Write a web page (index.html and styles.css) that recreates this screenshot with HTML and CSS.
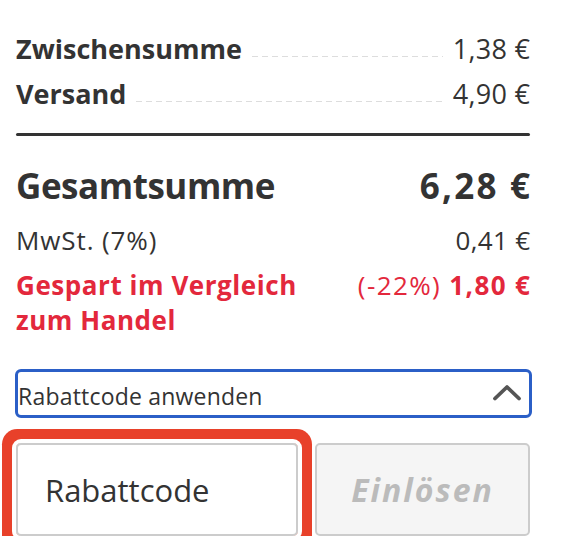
FILE: index.html
```html
<!DOCTYPE html>
<html lang="de">
<head>
<meta charset="utf-8">
<title>Warenkorb Summe</title>
<link rel="stylesheet" href="styles.css">
</head>
<body>
<div class="summary">
  <div class="line">
    <span class="label">Zwischensumme</span>
    <span class="leader"></span>
    <span class="value">1,38 €</span>
  </div>
  <div class="line">
    <span class="label">Versand</span>
    <span class="leader"></span>
    <span class="value">4,90 €</span>
  </div>
  <div class="divider"></div>
  <div class="total">
    <span class="total-label">Gesamtsumme</span>
    <span class="total-value">6,28 €</span>
  </div>
  <div class="tax">
    <span class="tax-label">MwSt. (7%)</span>
    <span class="tax-value">0,41 €</span>
  </div>
  <div class="saved">
    <span class="saved-label">Gespart im Vergleich zum Handel</span>
    <span class="saved-value"><span class="pct">(-22%)</span> <b>1,80 €</b></span>
  </div>
  <div class="coupon-toggle">
    <span class="toggle-text">Rabattcode anwenden</span>
    <svg class="chev" width="30" height="17" viewBox="0 0 30 17"><path d="M3 14.5 L15 3 L27 14.5" fill="none" stroke="#555" stroke-width="3.8" stroke-linecap="round" stroke-linejoin="round"/></svg>
  </div>
  <div class="coupon-row">
    <div class="input">Rabattcode</div>
    <div class="btn">Einlösen</div>
  </div>
</div>
</body>
</html>
```
FILE: styles.css
```css
html, body {
  margin: 0;
  padding: 0;
  background: #fff;
}
body {
  font-family: "Open Sans", "DejaVu Sans", sans-serif;
  color: #333;
}
.summary {
  width: 514px;
  margin-left: 16px;
  padding-top: 26px;
}
.line {
  display: flex;
  align-items: baseline;
  height: 45px;
  line-height: 45px;
  font-size: 27px;
}
.label {
  font-weight: 700;
}
.value {
  font-weight: 400;
  letter-spacing: 0.3px;
  margin-right: -0.3px;
}
.leader {
  flex: 1;
  height: 1px;
  margin: 0 10px;
  background: repeating-linear-gradient(to right, #ddd 0 6px, transparent 6px 10px);
  transform: translateY(-2px);
}
.divider {
  height: 3px;
  background: #333;
  border-radius: 2px;
  margin-top: 17px;
}
.total {
  display: flex;
  justify-content: space-between;
  font-size: 35px;
  font-weight: 700;
  line-height: 44px;
  margin-top: 28px;
}
.total-label {
  letter-spacing: -0.45px;
}
.total-value {
  letter-spacing: 2.2px;
  margin-right: -2.2px;
}
.tax {
  display: flex;
  justify-content: space-between;
  font-size: 26px;
  line-height: 35px;
  margin-top: 15px;
}
.tax-label {
  letter-spacing: 0.9px;
}
.tax-value {
  letter-spacing: 0.3px;
  margin-right: -0.3px;
}
.saved {
  display: flex;
  justify-content: space-between;
  color: #e3283c;
  font-size: 26px;
  line-height: 35px;
  margin-top: 10px;
}
.saved-label {
  font-weight: 700;
  width: 300px;
  letter-spacing: 0.55px;
}
.saved-value {
  letter-spacing: 1.4px;
  margin-right: -1.4px;
}
.pct {
  font-weight: 400;
}
.saved-value b {
  font-weight: 700;
}
.coupon-toggle {
  display: flex;
  align-items: center;
  justify-content: space-between;
  box-sizing: border-box;
  height: 49px;
  margin-top: 31px;
  margin-left: -1px;
  margin-right: -2px;
  border: 3px solid #2b5fc7;
  border-radius: 6px;
  padding: 5px 7px 0 0;
  font-size: 23px;
}
.toggle-text {
  letter-spacing: 0.2px;
}
.chev {
  margin-top: -7px;
}
.coupon-row {
  display: flex;
  gap: 17px;
  margin-top: 25px;
}
.input {
  box-sizing: border-box;
  width: 282px;
  height: 93px;
  border: 2px solid #ccc;
  border-radius: 5px;
  padding-left: 27px;
  display: flex;
  align-items: center;
  font-size: 31px;
  box-shadow: 0 0 0 4px #fff, 0 0 0 14px #e8412a;
}
.btn {
  box-sizing: border-box;
  flex: 1;
  height: 93px;
  border: 2px solid #ccc;
  border-radius: 5px;
  background: #f5f5f5;
  color: #bbb;
  display: flex;
  align-items: center;
  justify-content: center;
  font-size: 32px;
  font-weight: 700;
  font-style: italic;
  letter-spacing: 2px;
}
```
